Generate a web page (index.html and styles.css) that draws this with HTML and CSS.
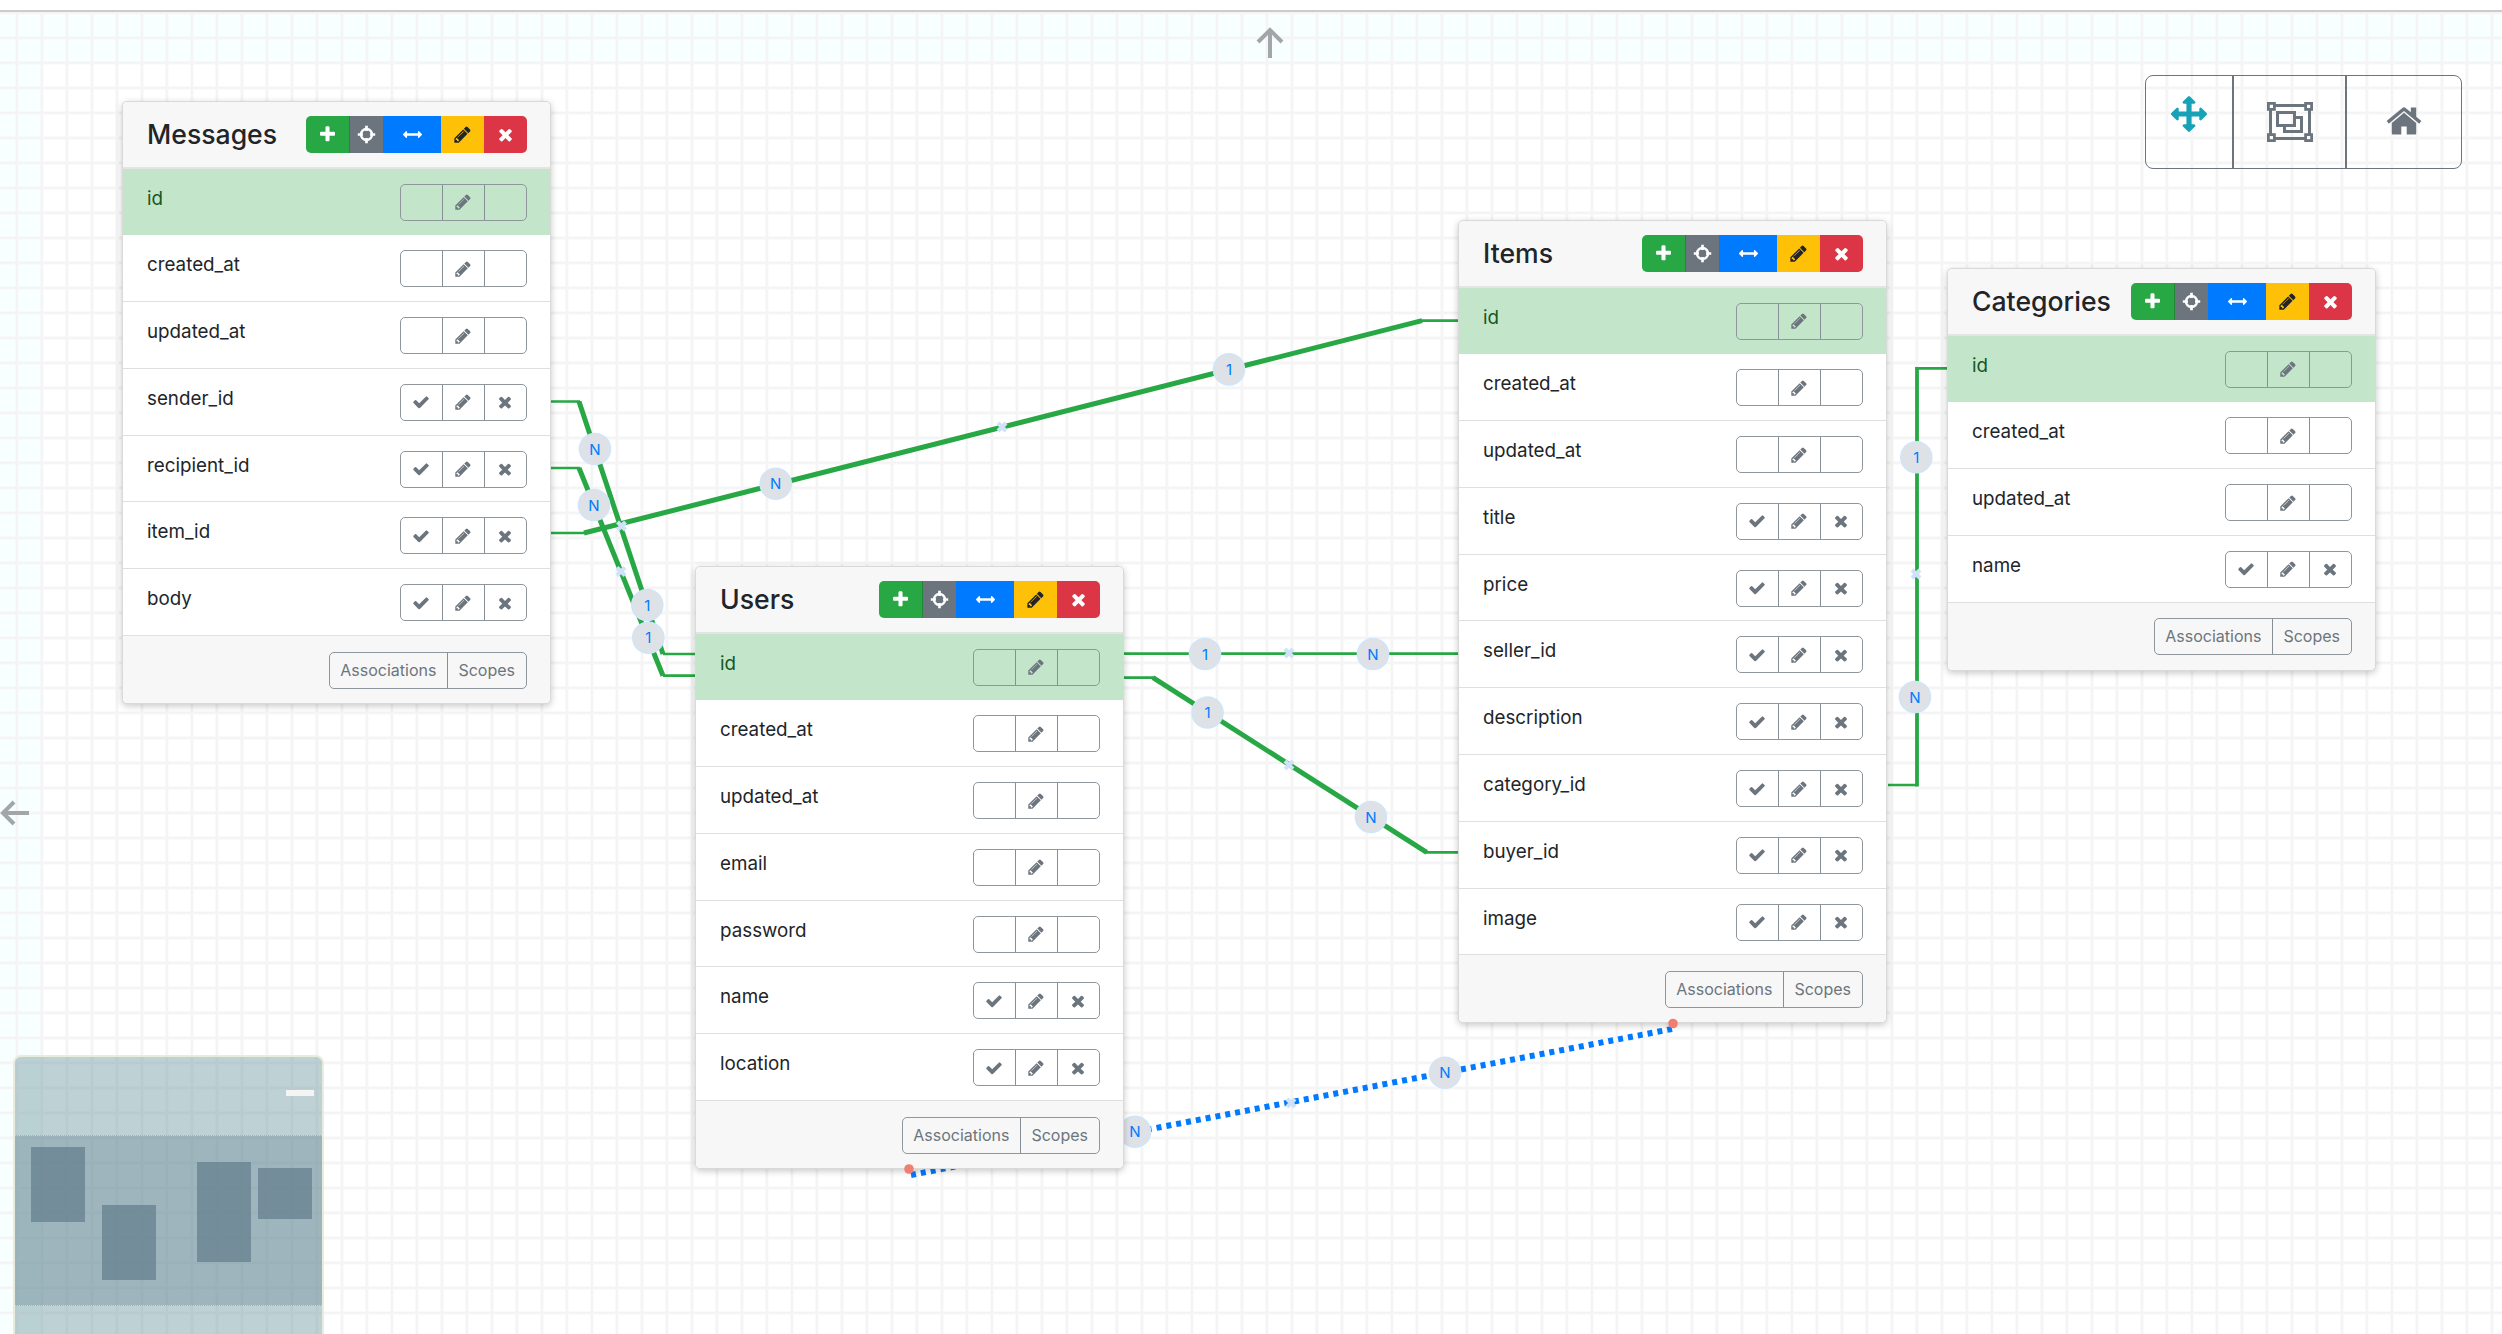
FILE: index.html
```html
<!DOCTYPE html>
<html lang="en">
<head>
    <meta charset="UTF-8">
    <title>Schema diagram</title>
    <link rel="stylesheet" href="styles.css">
</head>
<body>

<svg class="sprites" xmlns="http://www.w3.org/2000/svg">
    <symbol id="i-plus" viewBox="0 0 1792 1792"><path d="M1600 736v192q0 40-28 68t-68 28h-416v416q0 40-28 68t-68 28h-192q-40 0-68-28t-28-68v-416h-416q-40 0-68-28t-28-68v-192q0-40 28-68t68-28h416v-416q0-40 28-68t68-28h192q40 0 68 28t28 68v416h416q40 0 68 28t28 68z"/></symbol>
    <symbol id="i-target" viewBox="0 0 24 24"><circle cx="12" cy="12" r="7" fill="none" stroke="currentColor" stroke-width="3"/><path d="M10.3 1h3.4v6.5h-3.4zM10.3 16.5h3.4V23h-3.4zM1 10.3h6.5v3.4H1zM16.5 10.3H23v3.4h-6.5z"/></symbol>
    <symbol id="i-width" viewBox="0 0 1792 1792"><path d="M1792 896q0 26-19 45l-256 256q-19 19-45 19t-45-19-19-45v-128h-1024v128q0 26-19 45t-45 19-45-19l-256-256q-19-19-19-45t19-45l256-256q19-19 45-19t45 19 19 45v128h1024v-128q0-26 19-45t45-19 45 19l256 256q19 19 19 45z"/></symbol>
    <symbol id="i-pencil" viewBox="0 0 1792 1792"><path d="M491 1536l91-91-235-235-91 91v107h128v128h107zm523-928q0-22-22-22-10 0-17 7l-542 542q-7 7-7 17 0 22 22 22 10 0 17-7l542-542q7-7 7-17zm-54-192l416 416-832 832h-416v-416zm683 96q0 53-37 90l-166 166-416-416 166-165q36-38 90-38 53 0 91 38l235 234q37 39 37 91z"/></symbol>
    <symbol id="i-check" viewBox="0 0 1792 1792"><path d="M1671 566q0 40-28 68l-724 724-136 136q-28 28-68 28t-68-28l-136-136-362-362q-28-28-28-68t28-68l136-136q28-28 68-28t68 28l294 295 656-657q28-28 68-28t68 28l136 136q28 28 28 68z"/></symbol>
    <symbol id="i-times" viewBox="0 0 1792 1792"><path d="M1490 1322q0 40-28 68l-136 136q-28 28-68 28t-68-28l-294-294-294 294q-28 28-68 28t-68-28l-136-136q-28-28-28-68t28-68l294-294-294-294q-28-28-28-68t28-68l136-136q28-28 68-28t68 28l294 294 294-294q28-28 68-28t68 28l136 136q28 28 28 68t-28 68l-294 294 294 294q28 28 28 68z"/></symbol>
    <symbol id="i-move" viewBox="0 0 1792 1792"><path d="M1792 896q0 26-19 45l-256 256q-19 19-45 19t-45-19-19-45v-128h-384v384h128q26 0 45 19t19 45-19 45l-256 256q-19 19-45 19t-45-19l-256-256q-19-19-19-45t19-45 45-19h128v-384h-384v128q0 26-19 45t-45 19-45-19l-256-256q-19-19-19-45t19-45l256-256q19-19 45-19t45 19 19 45v128h384v-384h-128q-26 0-45-19t-19-45 19-45l256-256q19-19 45-19t45 19l256 256q19 19 19 45t-19 45-45 19h-128v384h384v-128q0-26 19-45t45-19 45 19l256 256q19 19 19 45z"/></symbol>
    <symbol id="i-home" viewBox="0 0 1792 1792"><path d="M1472 992v480q0 26-19 45t-45 19h-384v-384h-256v384h-384q-26 0-45-19t-19-45v-480q0-1 .5-3t.5-3l575-474 575 474q1 2 1 6zm223-69l-62 74q-8 9-21 11h-3q-13 0-21-7l-692-577-692 577q-12 8-24 7-13-2-21-11l-62-74q-8-10-7-23.5t11-21.5l719-599q32-26 76-26t76 26l244 204v-195q0-14 9-23t23-9h192q14 0 23 9t9 23v408l219 182q10 8 11 21.5t-7 23.5z"/></symbol>
    <symbol id="i-ungroup" viewBox="0 0 46 40"><g fill="none" stroke="currentColor" stroke-width="3"><rect x="3.5" y="3.5" width="39" height="33"/><rect x="10.5" y="10.5" width="17" height="13" /><path d="M27.5 15.5h7v14h-17v-6"/></g><g fill="#fff" stroke="currentColor" stroke-width="2.8"><rect x="1.4" y="1.4" width="6" height="6"/><rect x="38.6" y="1.4" width="6" height="6"/><rect x="1.4" y="32.6" width="6" height="6"/><rect x="38.6" y="32.6" width="6" height="6"/></g></symbol>
</svg>

<div class="top-bar"></div>

<main class="canvas">

    <!-- connections, under the tables -->
    <svg class="links" viewBox="0 12 2502 1322" xmlns="http://www.w3.org/2000/svg">
        <g class="line">
            <path d="M579 401.5L663 654"/>
            <path d="M579 468L663 675.7"/>
            <path d="M584 533L1422 320.7"/>
            <path d="M1153 677.7L1426.7 852.3"/>
            <path class="upright" d="M1917 367V786.5"/>
            <path class="thin" d="M551 401.5H580M663 654H696"/>
            <path class="thin" d="M551 468H580M663 675.7H696"/>
            <path class="thin" d="M551 533H586M1420 320.7H1458"/>
            <path class="thin" d="M1123 677.7H1155M1425 852.3H1458"/>
            <path class="thin" d="M1948 368.3H1915.5M1917 785H1888"/>
            <path class="thin" d="M1123 653.7H1458"/>
        </g>
        <path class="dotted" d="M911 1175L1672 1029"/>

        <g class="cross">
            <path d="M617.5 522l8 8M625.5 522l-8 8"/>
            <path d="M617 567.5l8 8M625 567.5l-8 8"/>
            <path d="M998 423l8 8M1006 423l-8 8"/>
            <path d="M1285 649l8 8M1293 649l-8 8"/>
            <path d="M1285 761l8 8M1293 761l-8 8"/>
            <path d="M1912 570l8 8M1920 570l-8 8"/>
            <path d="M1287 1099l8 8M1295 1099l-8 8"/>
        </g>

        <g class="badge"><circle cx="595" cy="449" r="15.6"/><text x="595" y="449">N</text></g>
        <g class="badge"><circle cx="594" cy="505" r="15.6"/><text x="594" y="505">N</text></g>
        <g class="badge"><circle cx="775.7" cy="483.7" r="15.6"/><text x="775.7" y="483.7">N</text></g>
        <g class="badge"><circle cx="647.3" cy="605" r="15.6"/><text x="647.3" y="605">1</text></g>
        <g class="badge"><circle cx="648.3" cy="637.7" r="15.6"/><text x="648.3" y="637.7">1</text></g>
        <g class="badge"><circle cx="1229" cy="369.4" r="15.6"/><text x="1229" y="369.4">1</text></g>
        <g class="badge"><circle cx="1205" cy="654" r="15.6"/><text x="1205" y="654">1</text></g>
        <g class="badge"><circle cx="1373" cy="654" r="15.6"/><text x="1373" y="654">N</text></g>
        <g class="badge"><circle cx="1207.5" cy="712.5" r="15.6"/><text x="1207.5" y="712.5">1</text></g>
        <g class="badge"><circle cx="1371" cy="817" r="15.6"/><text x="1371" y="817">N</text></g>
        <g class="badge"><circle cx="1916.3" cy="457.3" r="15.6"/><text x="1916.3" y="457.3">1</text></g>
        <g class="badge"><circle cx="1915" cy="697" r="15.6"/><text x="1915" y="697">N</text></g>
        <g class="badge"><circle cx="1445" cy="1072.7" r="15.6"/><text x="1445" y="1072.7">N</text></g>
        <g class="badge"><circle cx="1135" cy="1131.7" r="15.6"/><text x="1135" y="1131.7">N</text></g>
    </svg>

    <section class="table-card t-messages">
        <header class="card-head">
            <h3>Messages</h3>
            <div class="head-btns">
                <span class="hb green"><svg class="ico"><use href="#i-plus"/></svg></span>
                <span class="hb gray"><svg class="ico"><use href="#i-target"/></svg></span>
                <span class="hb blue"><svg class="ico wide"><use href="#i-width"/></svg></span>
                <span class="hb yellow"><svg class="ico"><use href="#i-pencil"/></svg></span>
                <span class="hb red"><svg class="ico"><use href="#i-times"/></svg></span>
            </div>
        </header>
        <div class="row key"><span>id</span><div class="row-btns"><i></i><i><svg class="ico"><use href="#i-pencil"/></svg></i><i></i></div></div>
        <div class="row"><span>created_at</span><div class="row-btns"><i></i><i><svg class="ico"><use href="#i-pencil"/></svg></i><i></i></div></div>
        <div class="row"><span>updated_at</span><div class="row-btns"><i></i><i><svg class="ico"><use href="#i-pencil"/></svg></i><i></i></div></div>
        <div class="row"><span>sender_id</span><div class="row-btns"><i><svg class="ico"><use href="#i-check"/></svg></i><i><svg class="ico"><use href="#i-pencil"/></svg></i><i><svg class="ico"><use href="#i-times"/></svg></i></div></div>
        <div class="row"><span>recipient_id</span><div class="row-btns"><i><svg class="ico"><use href="#i-check"/></svg></i><i><svg class="ico"><use href="#i-pencil"/></svg></i><i><svg class="ico"><use href="#i-times"/></svg></i></div></div>
        <div class="row"><span>item_id</span><div class="row-btns"><i><svg class="ico"><use href="#i-check"/></svg></i><i><svg class="ico"><use href="#i-pencil"/></svg></i><i><svg class="ico"><use href="#i-times"/></svg></i></div></div>
        <div class="row"><span>body</span><div class="row-btns"><i><svg class="ico"><use href="#i-check"/></svg></i><i><svg class="ico"><use href="#i-pencil"/></svg></i><i><svg class="ico"><use href="#i-times"/></svg></i></div></div>
        <footer class="card-foot"><div class="foot-btns"><span>Associations</span><span>Scopes</span></div></footer>
    </section>

    <section class="table-card t-users">
        <header class="card-head">
            <h3>Users</h3>
            <div class="head-btns">
                <span class="hb green"><svg class="ico"><use href="#i-plus"/></svg></span>
                <span class="hb gray"><svg class="ico"><use href="#i-target"/></svg></span>
                <span class="hb blue"><svg class="ico wide"><use href="#i-width"/></svg></span>
                <span class="hb yellow"><svg class="ico"><use href="#i-pencil"/></svg></span>
                <span class="hb red"><svg class="ico"><use href="#i-times"/></svg></span>
            </div>
        </header>
        <div class="row key"><span>id</span><div class="row-btns"><i></i><i><svg class="ico"><use href="#i-pencil"/></svg></i><i></i></div></div>
        <div class="row"><span>created_at</span><div class="row-btns"><i></i><i><svg class="ico"><use href="#i-pencil"/></svg></i><i></i></div></div>
        <div class="row"><span>updated_at</span><div class="row-btns"><i></i><i><svg class="ico"><use href="#i-pencil"/></svg></i><i></i></div></div>
        <div class="row"><span>email</span><div class="row-btns"><i></i><i><svg class="ico"><use href="#i-pencil"/></svg></i><i></i></div></div>
        <div class="row"><span>password</span><div class="row-btns"><i></i><i><svg class="ico"><use href="#i-pencil"/></svg></i><i></i></div></div>
        <div class="row"><span>name</span><div class="row-btns"><i><svg class="ico"><use href="#i-check"/></svg></i><i><svg class="ico"><use href="#i-pencil"/></svg></i><i><svg class="ico"><use href="#i-times"/></svg></i></div></div>
        <div class="row"><span>location</span><div class="row-btns"><i><svg class="ico"><use href="#i-check"/></svg></i><i><svg class="ico"><use href="#i-pencil"/></svg></i><i><svg class="ico"><use href="#i-times"/></svg></i></div></div>
        <footer class="card-foot"><div class="foot-btns"><span>Associations</span><span>Scopes</span></div></footer>
    </section>

    <section class="table-card t-items">
        <header class="card-head">
            <h3>Items</h3>
            <div class="head-btns">
                <span class="hb green"><svg class="ico"><use href="#i-plus"/></svg></span>
                <span class="hb gray"><svg class="ico"><use href="#i-target"/></svg></span>
                <span class="hb blue"><svg class="ico wide"><use href="#i-width"/></svg></span>
                <span class="hb yellow"><svg class="ico"><use href="#i-pencil"/></svg></span>
                <span class="hb red"><svg class="ico"><use href="#i-times"/></svg></span>
            </div>
        </header>
        <div class="row key"><span>id</span><div class="row-btns"><i></i><i><svg class="ico"><use href="#i-pencil"/></svg></i><i></i></div></div>
        <div class="row"><span>created_at</span><div class="row-btns"><i></i><i><svg class="ico"><use href="#i-pencil"/></svg></i><i></i></div></div>
        <div class="row"><span>updated_at</span><div class="row-btns"><i></i><i><svg class="ico"><use href="#i-pencil"/></svg></i><i></i></div></div>
        <div class="row"><span>title</span><div class="row-btns"><i><svg class="ico"><use href="#i-check"/></svg></i><i><svg class="ico"><use href="#i-pencil"/></svg></i><i><svg class="ico"><use href="#i-times"/></svg></i></div></div>
        <div class="row"><span>price</span><div class="row-btns"><i><svg class="ico"><use href="#i-check"/></svg></i><i><svg class="ico"><use href="#i-pencil"/></svg></i><i><svg class="ico"><use href="#i-times"/></svg></i></div></div>
        <div class="row"><span>seller_id</span><div class="row-btns"><i><svg class="ico"><use href="#i-check"/></svg></i><i><svg class="ico"><use href="#i-pencil"/></svg></i><i><svg class="ico"><use href="#i-times"/></svg></i></div></div>
        <div class="row"><span>description</span><div class="row-btns"><i><svg class="ico"><use href="#i-check"/></svg></i><i><svg class="ico"><use href="#i-pencil"/></svg></i><i><svg class="ico"><use href="#i-times"/></svg></i></div></div>
        <div class="row"><span>category_id</span><div class="row-btns"><i><svg class="ico"><use href="#i-check"/></svg></i><i><svg class="ico"><use href="#i-pencil"/></svg></i><i><svg class="ico"><use href="#i-times"/></svg></i></div></div>
        <div class="row"><span>buyer_id</span><div class="row-btns"><i><svg class="ico"><use href="#i-check"/></svg></i><i><svg class="ico"><use href="#i-pencil"/></svg></i><i><svg class="ico"><use href="#i-times"/></svg></i></div></div>
        <div class="row"><span>image</span><div class="row-btns"><i><svg class="ico"><use href="#i-check"/></svg></i><i><svg class="ico"><use href="#i-pencil"/></svg></i><i><svg class="ico"><use href="#i-times"/></svg></i></div></div>
        <footer class="card-foot"><div class="foot-btns"><span>Associations</span><span>Scopes</span></div></footer>
    </section>

    <section class="table-card t-categories">
        <header class="card-head">
            <h3>Categories</h3>
            <div class="head-btns">
                <span class="hb green"><svg class="ico"><use href="#i-plus"/></svg></span>
                <span class="hb gray"><svg class="ico"><use href="#i-target"/></svg></span>
                <span class="hb blue"><svg class="ico wide"><use href="#i-width"/></svg></span>
                <span class="hb yellow"><svg class="ico"><use href="#i-pencil"/></svg></span>
                <span class="hb red"><svg class="ico"><use href="#i-times"/></svg></span>
            </div>
        </header>
        <div class="row key"><span>id</span><div class="row-btns"><i></i><i><svg class="ico"><use href="#i-pencil"/></svg></i><i></i></div></div>
        <div class="row"><span>created_at</span><div class="row-btns"><i></i><i><svg class="ico"><use href="#i-pencil"/></svg></i><i></i></div></div>
        <div class="row"><span>updated_at</span><div class="row-btns"><i></i><i><svg class="ico"><use href="#i-pencil"/></svg></i><i></i></div></div>
        <div class="row"><span>name</span><div class="row-btns"><i><svg class="ico"><use href="#i-check"/></svg></i><i><svg class="ico"><use href="#i-pencil"/></svg></i><i><svg class="ico"><use href="#i-times"/></svg></i></div></div>
        <footer class="card-foot"><div class="foot-btns"><span>Associations</span><span>Scopes</span></div></footer>
    </section>

    <!-- end points of the link being drawn sit over the tables -->
    <svg class="links top" viewBox="0 12 2502 1322" xmlns="http://www.w3.org/2000/svg">
        <circle class="dot" cx="909" cy="1169" r="4.8"/>
        <circle class="dot" cx="1673" cy="1023.5" r="4.8"/>
    </svg>

    <svg class="arrow arrow-up" viewBox="0 0 28 32"><path d="M14 31V3M2 15L14 3l12 12"/></svg>
    <svg class="arrow arrow-left" viewBox="0 0 32 28"><path d="M29 14H3M14 3L3 14l11 11"/></svg>

    <div class="zoom-ctl">
        <span class="ctl ctl-move"><svg class="ico"><use href="#i-move"/></svg></span>
        <span class="ctl ctl-fit"><svg class="ico"><use href="#i-ungroup"/></svg></span>
        <span class="ctl ctl-home"><svg class="ico"><use href="#i-home"/></svg></span>
    </div>

    <aside class="minimap">
        <div class="mini-dash"></div>
        <div class="mini-view">
            <div class="mini-box b1"></div>
            <div class="mini-box b2"></div>
            <div class="mini-box b3"></div>
            <div class="mini-box b4"></div>
        </div>
    </aside>

</main>

</body>
</html>
```

FILE: styles.css
```css
* {
    box-sizing: border-box;
}

html,
body {
    height: 100%;
}

body {
    margin: 0;
    display: flex;
    flex-direction: column;
    overflow: hidden;
    background-color: #ffffff;
    color: #212529;
    font-family: Inter, "Liberation Sans", sans-serif;
}

.sprites {
    position: absolute;
    width: 0;
    height: 0;
}

.top-bar {
    height: 12px;
    flex: none;
    background-color: #ffffff;
    border-bottom: 2px solid #cccccc;
}

.canvas {
    position: relative;
    flex: 1;
    overflow: hidden;
    background-color: #ffffff;
    background-image:
        linear-gradient(90deg, #f7f7f7 0, #f2f2f2 1.25px, #f7f7f7 2.5px, transparent 2.5px),
        linear-gradient(#f7f7f7 0, #f2f2f2 1.25px, #f7f7f7 2.5px, transparent 2.5px),
        linear-gradient(#f7ffff, #f7ffff),
        linear-gradient(#f7ffff, #f7ffff);
    background-size: 25px 25px, 25px 25px, 100% 50px, 41px 100%;
    background-position: 15.5px 0, 0 -0.5px, 0 0, 0 0;
    background-repeat: repeat, repeat, no-repeat, no-repeat;
}

.links {
    position: absolute;
    left: 0;
    top: 0;
    width: 2502px;
    height: 1322px;
}

.links.top {
    pointer-events: none;
}

.line path {
    fill: none;
    stroke: #28a745;
    stroke-width: 5;
}

.line path.upright {
    stroke-width: 3.8;
}

.line path.thin {
    stroke-width: 2.7;
}

.dotted {
    fill: none;
    stroke: #007bff;
    stroke-width: 6;
    stroke-dasharray: 5 5;
}

.cross path {
    fill: none;
    stroke: #cfe2f7;
    stroke-width: 4;
}

.badge circle {
    fill: #dee2e6;
    stroke: #cfe5fb;
    stroke-width: 1.4;
}

.badge text {
    fill: #007bff;
    font-size: 15px;
    text-anchor: middle;
    dominant-baseline: central;
}

.dot {
    fill: #f27e72;
}

.table-card {
    position: absolute;
    width: 429px;
    background-color: #ffffff;
    border: 1px solid #d9d9d9;
    border-radius: 5px;
    box-shadow: 0 2px 7px rgba(0, 0, 0, 0.22);
}

.t-messages {
    left: 122px;
    top: 89px;
}

.t-users {
    left: 695px;
    top: 554px;
}

.t-items {
    left: 1458px;
    top: 208px;
}

.t-categories {
    left: 1947px;
    top: 256px;
}

.card-head {
    height: 66.5px;
    display: flex;
    align-items: center;
    justify-content: space-between;
    padding: 0 23.5px 0 24px;
    background-color: #f7f7f7;
    border-bottom: 2px solid #e4e4e4;
    border-radius: 5px 5px 0 0;
}

.card-head h3 {
    margin: 0;
    font-size: 26.6px;
    font-weight: 500;
}

.head-btns {
    display: flex;
    height: 37px;
    border-radius: 5px;
    overflow: hidden;
}

.hb {
    display: flex;
    align-items: center;
    justify-content: center;
    color: #ffffff;
    fill: currentColor;
}

.hb .ico {
    width: 19px;
    height: 19px;
}

.green {
    width: 43px;
    background-color: #28a745;
}

.gray {
    width: 34.5px;
    background-color: #6c757d;
    border-left: 1px solid #218838;
}

.blue {
    width: 58px;
    background-color: #007bff;
}

.yellow {
    width: 42.5px;
    background-color: #ffc107;
    color: #212529;
}

.red {
    width: 42.7px;
    background-color: #dc3545;
}

.ico {
    display: block;
    fill: currentColor;
}

.row {
    height: 66.8px;
    display: flex;
    justify-content: space-between;
    padding: 15px 23.5px 0 24px;
    border-bottom: 1px solid #dfdfdf;
    font-size: 18.8px;
}

.row span {
    line-height: 29px;
}

.row.key {
    background-color: #c3e6cb;
    border-bottom: none;
    color: #155724;
}

.row-btns {
    display: flex;
    width: 127px;
    height: 37px;
    border: 1px solid #8f969c;
    border-radius: 5px;
}

.row-btns i {
    flex: 1;
    display: flex;
    align-items: center;
    justify-content: center;
    color: #6c757d;
}

.row-btns i:nth-child(2) {
    border-left: 1.5px solid #868e96;
    border-right: 1.5px solid #868e96;
}

.row-btns .ico {
    width: 18px;
    height: 18px;
}

.card-foot {
    height: 67px;
    display: flex;
    justify-content: flex-end;
    padding: 15.5px 23.5px 0 24px;
    background-color: #f7f7f7;
    border-radius: 0 0 5px 5px;
}

.foot-btns {
    display: flex;
    height: 37px;
    border: 1px solid #8f969c;
    border-radius: 5px;
    color: #6c757d;
    font-size: 16px;
    line-height: 35px;
}

.foot-btns span {
    padding: 0 10.5px;
}

.foot-btns span + span {
    border-left: 1px solid #868e96;
}

.arrow {
    position: absolute;
    fill: none;
    stroke: #a3a6a8;
    stroke-width: 4;
}

.arrow-up {
    left: 1256px;
    top: 15px;
    width: 28px;
    height: 32px;
}

.arrow-left {
    left: 0;
    top: 786.5px;
    width: 32px;
    height: 28px;
}

.zoom-ctl {
    position: absolute;
    left: 2145px;
    top: 63px;
    width: 317px;
    height: 94px;
    display: flex;
    border: 1.8px solid #6c757d;
    border-radius: 8px;
    color: #6c757d;
}

.ctl {
    display: flex;
    justify-content: center;
}

.ctl-move {
    width: 86px;
    padding-top: 20px;
    color: #17a2b8;
}

.ctl-move .ico {
    width: 36px;
    height: 36px;
}

.ctl-fit {
    width: 115px;
    padding-top: 26px;
    border-left: 2.2px solid #6c757d;
    border-right: 2.2px solid #6c757d;
}

.ctl-fit .ico {
    width: 46px;
    height: 40px;
}

.ctl-home {
    flex: 1;
    padding-top: 26px;
}

.ctl-home .ico {
    width: 38px;
    height: 38px;
}

.minimap {
    position: absolute;
    left: 13px;
    top: 1043px;
    width: 311px;
    height: 290px;
    padding-top: 78px;
    background-color: rgba(110, 152, 160, 0.45);
    border: 2px solid #e9ecdc;
    border-radius: 8px 8px 0 0;
}

.mini-dash {
    position: absolute;
    left: 271px;
    top: 33px;
    width: 28px;
    height: 6px;
    background-color: #f4f4f4;
}

.mini-view {
    position: relative;
    height: 171px;
    background-color: rgba(100, 130, 145, 0.35);
    border-top: 1px dotted #c4d4d8;
    border-bottom: 1px dotted #c4d4d8;
}

.mini-box {
    position: absolute;
    width: 54px;
    background-color: rgba(80, 110, 125, 0.55);
}

.b1 {
    left: 16px;
    top: 11px;
    height: 75px;
}

.b2 {
    left: 87px;
    top: 69px;
    height: 75px;
}

.b3 {
    left: 182px;
    top: 26px;
    height: 100px;
}

.b4 {
    left: 243px;
    top: 32px;
    height: 51px;
}
```
